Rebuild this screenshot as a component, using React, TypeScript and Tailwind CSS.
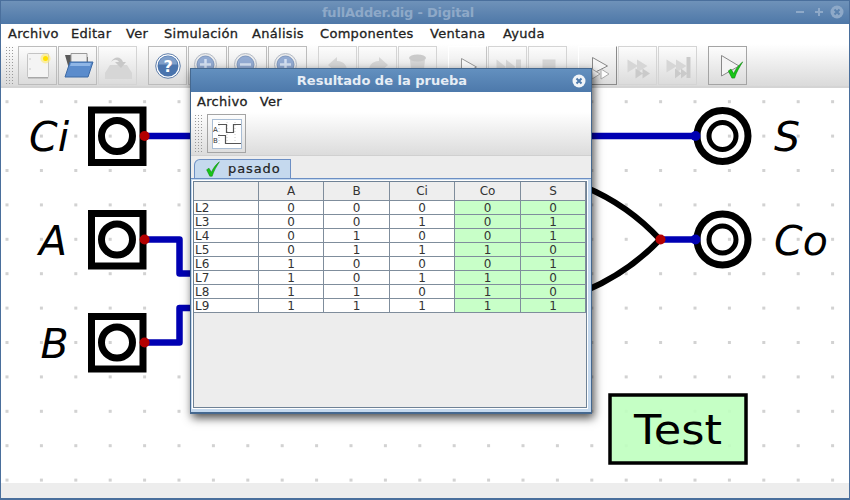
import type { ReactNode } from "react";

const menuFont = "font-['DejaVu_Sans',sans-serif] text-[13px] text-[#222] [-webkit-text-stroke:0.3px_#222] tracking-[0.3px]";

const dotsX = Array.from({ length: 25 }, (_, i) => 7 + i * 34.4);
const dotsY = Array.from({ length: 12 }, (_, i) => 101.7 + i * 34.4);

const rows = [
  ["L2", "0", "0", "0", "0", "0"],
  ["L3", "0", "0", "1", "0", "1"],
  ["L4", "0", "1", "0", "0", "1"],
  ["L5", "0", "1", "1", "1", "0"],
  ["L6", "1", "0", "0", "0", "1"],
  ["L7", "1", "0", "1", "1", "0"],
  ["L8", "1", "1", "0", "1", "0"],
  ["L9", "1", "1", "1", "1", "1"],
];

const widths = ["w-[65px]", "w-[65px]", "w-[66px]", "w-[65px]", "w-[66px]", "w-[65px]"];

const menu = [
  { label: "Archivo", width: "w-[63px]" },
  { label: "Editar", width: "w-[55px]" },
  { label: "Ver", width: "w-[38px]" },
  { label: "Simulación", width: "w-[88px]" },
  { label: "Análisis", width: "w-[68px]" },
  { label: "Componentes", width: "w-[110px]" },
  { label: "Ventana", width: "w-[73px]" },
  { label: "Ayuda", width: "w-[50px]" },
];

const Gripper = () => (
  <div className="w-[9px] h-[39px] bg-[radial-gradient(#999_0.7px,transparent_0.9px)] bg-[size:3px_3px]" />
);

function Icon({ children }: { children: ReactNode }) {
  return (
    <svg width="32" height="32" viewBox="0 0 32 32">
      {children}
    </svg>
  );
}

const Btn = ({ children, kind = "flat" }: { children?: ReactNode; kind?: "flat" | "on" | "raised" | "lit" | "off" }) => {
  const border =
    kind === "on"
      ? "border-[#a4a4a4]"
      : kind === "raised"
        ? "border-t-white border-l-white border-r-[#8a8a8a] border-b-[#8a8a8a] border-[1.5px]"
        : kind === "lit"
          ? "border-t-white border-l-white border-r-[#c4c4c4] border-b-[#c4c4c4]"
          : kind === "off"
            ? "border-[#d4d4d4]"
            : "border-[#bcbcbc]";
  return <div className={`w-[39px] h-[39px] border ${border} flex items-center justify-center`}>{children}</div>;
};

const grey = "#d6d6d6";

const NewDoc = () => (
  <Icon>
    <rect x="5.5" y="3.5" width="21" height="24" rx="1" fill="#f4f4f4" stroke="#c4c4c4" />
    <path d="M6 27h20v1.5H6z" fill="#a8a8a8" />
    <circle cx="8" cy="9" r="0.7" fill="#bbb" />
    <circle cx="8" cy="19" r="0.7" fill="#bbb" />
    <circle cx="23.5" cy="8.5" r="5" fill="#ffe96b" opacity="0.6" />
    <circle cx="23.5" cy="8.5" r="2.5" fill="#ffe000" />
  </Icon>
);

const OpenFolder = () => (
  <Icon>
    <path d="M3 5h6l2 2h15v12H7z" fill="#5a5a5a" />
    <path d="M9 3.5h16v11H9z" fill="#efefef" stroke="#999" />
    <path d="M8 12h23l-5 15H3z" fill="#5b8ccc" stroke="#3d6aa5" />
    <path d="M9 13h20l-1 3H8z" fill="#8fb6e6" />
  </Icon>
);

const Save = () => (
  <Icon>
    <path d="M8 15h17l5 8v6H3v-6z" fill={grey} />
    <path d="M9 12c3-6 10-6 12 0l3 0-5 6-6-6 4 0c-2-3-5-3-8 0z" fill="#c8c8c8" />
  </Icon>
);

const Help = () => (
  <svg width="26" height="26" viewBox="0 0 36 36">
    <circle cx="18" cy="18" r="17" fill="#fff" stroke="#466a9c" strokeWidth="1.2" />
    <circle cx="18" cy="18" r="14.5" fill="#4a74ad" />
    <path d="M5 16a13 12 0 0 1 26 0z" fill="#7f9fca" />
    <text x="18" y="26" textAnchor="middle" fontFamily="DejaVu Sans" fontWeight="bold" fontSize="22" fill="#fff">?</text>
  </svg>
);

const Zoom = ({ d }: { d: string }) => (
  <Icon>
    <circle cx="13.5" cy="14.5" r="11" fill="#ececec" stroke="#b4bbc6" />
    <circle cx="13.5" cy="14.5" r="8.5" fill="#93abd2" stroke="#7d96bd" />
    <path d={d} stroke="#d5e1f2" strokeWidth="2.5" fill="none" />
  </Icon>
);

const Undo = ({ flip }: { flip?: boolean }) => (
  <Icon>
    <path
      d="M15 7 6 15l9 8v-5c4 0 7 1 10 6 1-8-3-13-10-13z"
      fill={grey}
      transform={flip ? "translate(32 0) scale(-1 1)" : undefined}
    />
  </Icon>
);

const Trash = () => (
  <Icon>
    <path d="M8 10h15l-2 18H10z" fill={grey} />
    <ellipse cx="15.5" cy="8" rx="8.5" ry="3.5" fill="#cacaca" />
  </Icon>
);

const Play = () => (
  <Icon>
    <path d="M9.5 8.5 24.5 17 9.5 25z" fill="#fafafa" stroke="#999" />
  </Icon>
);

const Step = () => (
  <Icon>
    <path d="M4.5 9.5 14 17 4.5 24.5zM14 9.5 23.5 17 14 24.5z" fill={grey} />
    <path d="M24 9.5h5v15h-5z" fill={grey} />
  </Icon>
);

const Stop = () => (
  <Icon>
    <rect x="10.5" y="9.5" width="13" height="13" fill={grey} />
  </Icon>
);

const MicroPlay = () => (
  <Icon>
    <path d="M10.5 7.5 25.5 16 10.5 23.5z" fill="#f6f6f6" stroke="#888" />
    <path d="M10 19l8 5-8 5zM19 19l8 5-8 5z" fill="#fff" stroke="#aaa" />
  </Icon>
);

const MicroRun = () => (
  <Icon>
    <path d="M5.5 9.5 16 16 5.5 22.5zM15 9.5 25.5 16 15 22.5z" fill={grey} />
    <path d="M13.5 18.5 21 23.5 13.5 28.5zM20.5 18.5 28 23.5 20.5 28.5z" fill="#cacaca" />
  </Icon>
);

const MicroStep = () => (
  <Icon>
    <path d="M4.5 9.5 15 16 4.5 22.5zM14 9.5 24.5 16 14 22.5z" fill={grey} />
    <path d="M24.5 7h4v21h-4z" fill="#cacaca" />
    <path d="M13 18.5 19.5 23.5 13 28.5zM19 18.5 25.5 23.5 19 28.5z" fill="#cacaca" />
  </Icon>
);

const Check = ({ size = 20 }: { size?: number }) => (
  <svg width={size} height={size} viewBox="0 0 20 20">
    <path d="M2 11l3-2 3 5c2-5 6-10 10-13-3 5-7 11-9 18H6z" fill="#17c617" stroke="#0a7d0a" strokeWidth="0.6" />
  </svg>
);

const TestRun = () => (
  <svg width="34" height="34" viewBox="0 0 34 34">
    <path d="M10.5 6.5 28 17 10.5 27z" fill="#f4f4f4" stroke="#888" />
    <g transform="translate(15.5 12)">
      <Check size={18} />
    </g>
  </svg>
);

const Timing = () => (
  <svg width="30" height="30" viewBox="0 0 30 30">
    <rect x="0.5" y="0.5" width="29" height="29" fill="#fff" stroke="#a9bdd4" />
    <path d="M7 3v24M15 3v24M23 3v24" stroke="#ccc" strokeDasharray="1 2" />
    <path d="M6 5.5h8.5v8H21.5v-8H29" fill="none" stroke="#555" strokeWidth="1.2" />
    <path d="M6 16.5h7.5v8H29" fill="none" stroke="#555" strokeWidth="1.2" />
    <text x="1" y="13" fontFamily="DejaVu Sans" fontSize="7" fill="#333">A</text>
    <text x="1" y="24" fontFamily="DejaVu Sans" fontSize="7" fill="#333">B</text>
  </svg>
);

const Input = ({ y }: { y: number }) => (
  <g>
    <rect x="91.5" y={y - 26} width="51.5" height="52.5" fill="none" stroke="#000" strokeWidth="7" />
    <circle cx="117" cy={y} r="15.5" fill="none" stroke="#000" strokeWidth="7" />
  </g>
);

const Output = ({ y }: { y: number }) => (
  <g>
    <circle cx="722.5" cy={y} r="25.5" fill="none" stroke="#000" strokeWidth="7" />
    <circle cx="722.5" cy={y} r="13.5" fill="none" stroke="#000" strokeWidth="5" />
  </g>
);

function Circuit() {
  const text = { fontFamily: "DejaVu Sans", fontSize: 41, fill: "#000" };
  return (
    <svg className="block w-[848px] h-[395px]" viewBox="1 88 848 395">
      {dotsY.map((y) =>
        dotsX.map((x) => <rect key={`${x}-${y}`} x={x - 1.5} y={y - 1.5} width="3" height="3" fill="#d2d2d2" />),
      )}
      <Input y={136} />
      <Input y={239.5} />
      <Input y={342.5} />
      <g fill="none" stroke="#0000b3" strokeWidth="6.5" strokeLinejoin="round">
        <path d="M145 136H696" />
        <path d="M145 239.5h34.5v34H200" />
        <path d="M145 342.5h34.5v-34.5H200" />
        <path d="M660 239.5h36" />
      </g>
      <path d="M585 187Q628 205 660 239.5M585 291Q628 273 660 239.5" fill="none" stroke="#000" strokeWidth="6" />
      <Output y={136} />
      <Output y={239.5} />
      <circle cx="144.6" cy="136" r="5" fill="#b30000" />
      <circle cx="144.6" cy="239.5" r="5" fill="#b30000" />
      <circle cx="144.6" cy="342.5" r="5" fill="#b30000" />
      <circle cx="660.5" cy="239.5" r="5" fill="#b30000" />
      <circle cx="695.5" cy="136" r="5" fill="#0000b3" />
      <circle cx="695.5" cy="239.5" r="5" fill="#0000b3" />
      <text {...text} x="29" y="151" fontStyle="italic">Ci</text>
      <text {...text} x="39" y="255" fontStyle="italic">A</text>
      <text {...text} x="40.5" y="358" fontStyle="italic">B</text>
      <text {...text} x="774" y="151" fontStyle="italic">S</text>
      <text {...text} x="774" y="255" fontStyle="italic">Co</text>
      <rect x="610" y="395" width="136" height="68" fill="#bfffbf" fillOpacity="0.9" stroke="#000" strokeWidth="3.5" />
      <text {...text} x="634" y="444" textLength="88" lengthAdjust="spacingAndGlyphs">Test</text>
    </svg>
  );
}

function ResultDialog() {
  return (
    <div className="absolute left-[189px] top-[68px] w-[402px] h-[346px] flex flex-col border border-[#45688f] border-b-2 bg-[#ededed] shadow-[2px_4px_9px_rgba(0,0,0,0.7)]">
      <div className="relative h-[23px] shrink-0 flex items-center justify-center bg-gradient-to-b from-[#6390bf] to-[#4d79ab] font-['DejaVu_Sans',sans-serif] font-bold text-[13px] text-[#e6edf5]">
        <span className="mr-[18px]">Resultado de la prueba</span>
        <svg className="absolute right-[5px] top-[5px]" width="14" height="14" viewBox="0 0 14 14">
          <circle cx="7" cy="7" r="6.5" fill="#f0f4f8" />
          <path d="M4.5 4.5l5 5M9.5 4.5l-5 5" stroke="#4d79ab" strokeWidth="2" />
        </svg>
      </div>
      <div className={`h-[20px] shrink-0 flex gap-[12px] pl-[6px] items-center bg-white ${menuFont}`}>
        <span>Archivo</span>
        <span>Ver</span>
      </div>
      <div className="h-[44px] shrink-0 flex items-start gap-[4px] pt-[2px] pl-[3px] bg-gradient-to-b from-white to-[#dcdcdc] border-b border-[#d0d0d0]">
        <Gripper />
        <Btn kind="on">
          <Timing />
        </Btn>
      </div>
      <div className="h-[22px] shrink-0 flex items-end pl-[3px]">
        <div className="w-[97px] h-[19px] flex items-center gap-[7px] pl-[10px] bg-[#c5d9ee] border border-b-0 border-[#6c8fc4] rounded-tl-[6px] font-['DejaVu_Sans',sans-serif] text-[13px] text-[#222] tracking-[0.9px] [-webkit-text-stroke:0.2px_#222]">
          <div className="w-[16px] h-[16px] shrink-0 flex items-center justify-center">
            <Check size={16} />
          </div>
          pasado
        </div>
      </div>
      <div className="flex-1 border-t border-[#6c8fc4] bg-[#c5d9ee] pt-[2px] pl-[2px] pr-[4px] pb-[4px] flex">
        <div className="flex-1 border border-[#6f8296] ring-1 ring-white bg-[#ededed] font-['DejaVu_Sans',sans-serif] text-[12px] text-[#333]">
          <div className="flex h-[19px] border-b border-[#7f8d9c]">
            {["", "A", "B", "Ci", "Co", "S"].map((h, i) => (
              <div
                key={i}
                className={`${widths[i]} flex items-center justify-center border-r border-[#7f8d9c] bg-[#eeeeee]`}
              >
                {h}
              </div>
            ))}
          </div>
          {rows.map((row) => (
            <div key={row[0]} className="flex h-[14px] border-b border-[#7f8d9c] leading-[14px]">
              {row.map((c, i) => (
                <div
                  key={i}
                  className={`${widths[i]} border-r border-[#7f8d9c] ${i === 0 ? "pl-[1px] text-left" : "text-center"} ${i > 3 ? "bg-[#c8ffc8]" : "bg-white"}`}
                >
                  {c}
                </div>
              ))}
            </div>
          ))}
        </div>
      </div>
    </div>
  );
}

export default function App() {
  return (
    <div className="relative w-[850px] h-[500px] overflow-hidden flex flex-col bg-white border-x border-[#4a6f9c]">
      <div className="relative h-[24px] shrink-0 flex items-center justify-center pr-[54px] bg-gradient-to-b from-[#6f92b9] to-[#4e78a8] border-t border-[#4a6f9c] font-['DejaVu_Sans',sans-serif] font-bold text-[13px] text-[#8ea9c8] tracking-[-0.2px]">
        fullAdder.dig - Digital
        <div className="absolute right-[5px] top-[4px] flex items-center">
          <span className="w-[8px] h-[2px] bg-[#8ea9c8]" />
          <svg className="ml-[10px]" width="10" height="10" viewBox="0 0 10 10">
            <path d="M1 5h8M5 1v8" stroke="#8ea9c8" strokeWidth="2" />
          </svg>
          <svg className="ml-[6px]" width="14" height="14" viewBox="0 0 14 14">
            <circle cx="7" cy="7" r="6.5" fill="#8ea9c8" />
            <path d="M4.5 4.5l5 5M9.5 4.5l-5 5" stroke="#5b82ae" strokeWidth="2" />
          </svg>
        </div>
      </div>
      <div className={`h-[20px] shrink-0 flex items-center pl-[7px] bg-white ${menuFont}`}>
        {menu.map((m) => (
          <span key={m.label} className={m.width}>
            {m.label}
          </span>
        ))}
      </div>
      <div className="h-[44px] shrink-0 flex items-start pt-[2px] pl-[4px] bg-gradient-to-b from-white to-[#dadada] border-b-2 border-[#d4d4d4]">
        <Gripper />
        <div className="flex gap-[1px] ml-[4px]">
          <Btn><NewDoc /></Btn>
          <Btn><OpenFolder /></Btn>
          <Btn kind="off"><Save /></Btn>
        </div>
        <div className="flex gap-[1px] ml-[11px]">
          <Btn><Help /></Btn>
          <Btn><Zoom d="M8 14.5h11M13.5 9v11" /></Btn>
          <Btn><Zoom d="M8 14.5h11" /></Btn>
          <Btn><Zoom d="M8 14.5h11M13.5 9v11" /></Btn>
        </div>
        <div className="flex gap-[1px] ml-[11px]">
          <Btn kind="off"><Undo /></Btn>
          <Btn kind="off"><Undo flip /></Btn>
          <Btn kind="off"><Trash /></Btn>
        </div>
        <div className="flex gap-[1px] ml-[11px]">
          <Btn kind="lit"><Play /></Btn>
          <Btn kind="off"><Step /></Btn>
          <Btn kind="off"><Stop /></Btn>
        </div>
        <div className="flex gap-[1px] ml-[11px]">
          <Btn kind="raised"><MicroPlay /></Btn>
          <Btn kind="off"><MicroRun /></Btn>
          <Btn kind="off"><MicroStep /></Btn>
        </div>
        <div className="flex gap-[1px] ml-[11px]">
          <Btn kind="on"><TestRun /></Btn>
        </div>
      </div>
      <div className="flex-1 min-h-0 overflow-hidden">
        <Circuit />
      </div>
      <div className="h-[15px] shrink-0 bg-[#ededed]" />
      <div className="h-[2px] shrink-0 bg-[#4a6f9c]" />
      <ResultDialog />
    </div>
  );
}
